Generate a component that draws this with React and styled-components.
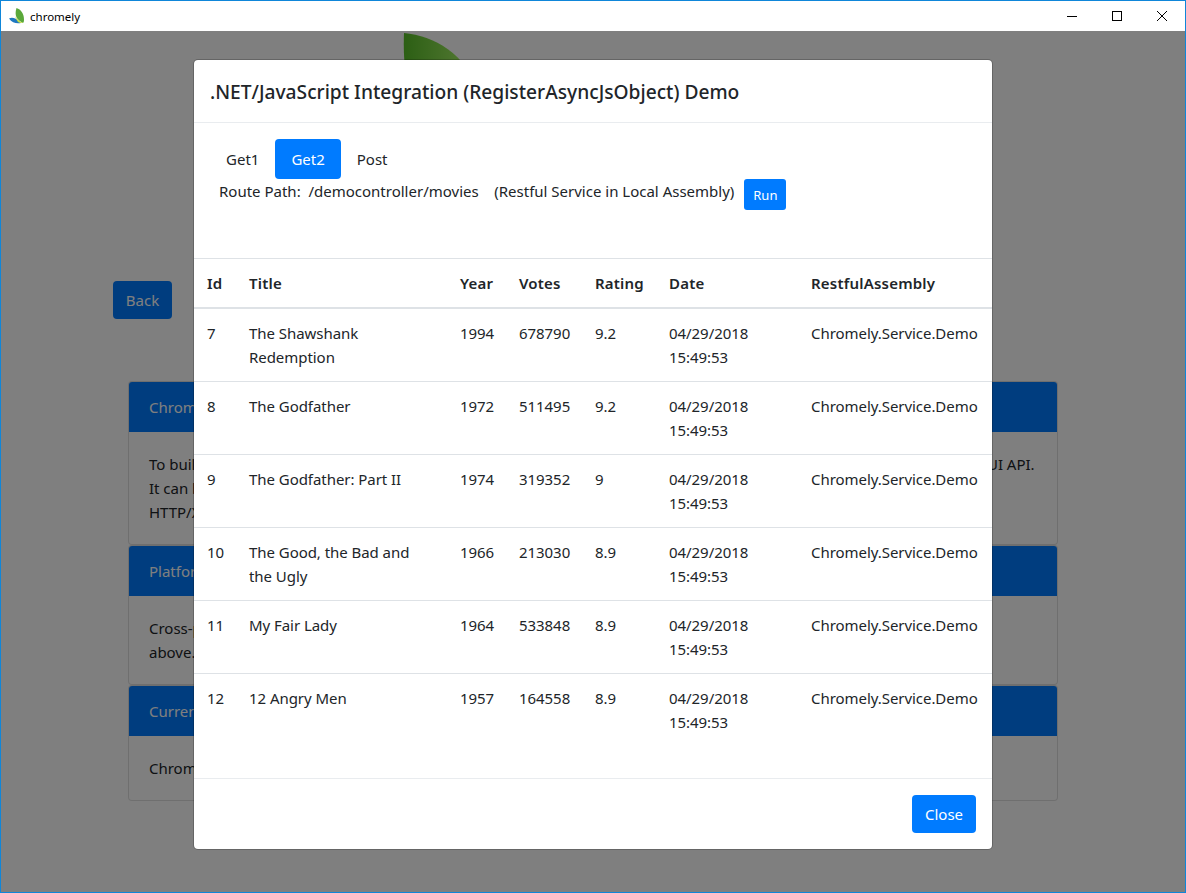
import styled, { createGlobalStyle } from 'styled-components';

const movies = [
  { id: 7, title: 'The Shawshank Redemption', year: 1994, votes: 678790, rating: '9.2' },
  { id: 8, title: 'The Godfather', year: 1972, votes: 511495, rating: '9.2' },
  { id: 9, title: 'The Godfather: Part II', year: 1974, votes: 319352, rating: '9' },
  { id: 10, title: 'The Good, the Bad and the Ugly', year: 1966, votes: 213030, rating: '8.9' },
  { id: 11, title: 'My Fair Lady', year: 1964, votes: 533848, rating: '8.9' },
  { id: 12, title: '12 Angry Men', year: 1957, votes: 164558, rating: '8.9' },
];

const cards = [
  {
    title: 'Chromely Purpose',
    lines: [
      'To build HTML5 desktop apps with .NET/.NET Core, using the Chromium Embedded Framework (CEF) and a native Gtk GUI API.',
      'It can be used with any JavaScript framework and it serves requests without',
      'HTTP/XHR servers.',
    ],
  },
  {
    title: 'Platforms',
    lines: ['Cross-platform support for Windows, Linux and macOS with the versions listed', 'above.'],
  },
  { title: 'Current Version', lines: ['Chromely 4.0'] },
];

const GlobalStyle = createGlobalStyle`
  html, body {
    margin: 0;
    padding: 0;
    background: #808080;
  }
  * {
    box-sizing: border-box;
  }
  body {
    font-family: "Noto Sans", "Open Sans", sans-serif;
    color: #212529;
  }
`;

const Frame = styled.div`
  position: relative;
  width: 1186px;
  height: 893px;
  border: 1px solid #0f86d9;
  background: #fff;
  overflow: hidden;
`;

const TitleBar = styled.header`
  height: 30px;
  display: flex;
  align-items: center;
  background: #fff;
`;

const AppName = styled.span`
  margin-left: 5px;
  font-size: 11.5px;
  color: #000;
`;

const AppIcon = styled.svg`
  width: 16px;
  height: 16px;
  margin-left: 8px;
`;

const WindowButtons = styled.div`
  margin-left: auto;
  margin-right: 1px;
  display: flex;
`;

const WindowButton = styled.div`
  width: 45px;
  height: 30px;
  display: flex;
  align-items: center;
  justify-content: center;
  svg {
    width: 12px;
    height: 12px;
  }
`;

const Page = styled.main`
  position: relative;
  height: 861px;
  padding: 2px 127px 0;
  overflow: hidden;
`;

const Hero = styled.svg`
  display: block;
  width: 120px;
  height: 120px;
  margin-left: 275px;
`;

const BackButton = styled.div`
  width: 59px;
  height: 38px;
  margin: 128px 0 0 -15px;
  display: flex;
  align-items: center;
  justify-content: center;
  border-radius: 4px;
  background: #007bff;
  color: #fff;
  font-size: 15px;
`;

const Cards = styled.section`
  margin-top: 62px;
`;

const Card = styled.article`
  border: 1px solid rgba(0, 0, 0, 0.125);
  border-radius: 4px;
  overflow: hidden;
  background: #fff;
`;

const CardHeader = styled.div`
  height: 50px;
  padding: 0 20px;
  display: flex;
  align-items: center;
  background: #007bff;
  color: #fff;
  font-size: 15px;
`;

const CardBody = styled.div`
  padding: 20px 20px 20px;
  font-size: 15px;
  line-height: 24px;
`;

const CardLine = styled.div`
  white-space: nowrap;
  letter-spacing: -0.02px;
`;

const Backdrop = styled.div`
  position: absolute;
  inset: 0;
  background: rgba(0, 0, 0, 0.5);
`;

const Modal = styled.div`
  position: absolute;
  left: 192px;
  top: 58px;
  width: 800px;
  height: 791px;
  display: flex;
  flex-direction: column;
  background: #fff;
  border: 1px solid rgba(0, 0, 0, 0.2);
  border-radius: 5px;
  background-clip: padding-box;
`;

const ModalHeader = styled.div`
  height: 63px;
  padding: 0 16px;
  display: flex;
  align-items: center;
  border-bottom: 1px solid #e9ecef;
`;

const ModalTitle = styled.h5`
  margin: 0;
  font-size: 19.2px;
  font-weight: 500;
`;

const ModalBody = styled.div`
  flex: 1;
`;

const Controls = styled.div`
  height: 135px;
  padding: 16px 16px 0;
`;

const Tabs = styled.nav`
  display: flex;
`;

const Tab = styled.div`
  height: 40px;
  padding: 0 16px;
  display: flex;
  align-items: center;
  border-radius: 4px;
  font-size: 15px;
  color: ${(props) => (props.$active ? '#fff' : '#212529')};
  background: ${(props) => (props.$active ? '#007bff' : 'transparent')};
`;

const RouteRow = styled.div`
  display: flex;
  align-items: flex-start;
  padding-left: 9px;
  font-size: 15px;
  line-height: 24px;
  white-space: pre;
`;

const RunButton = styled.div`
  width: 42px;
  height: 31px;
  margin-left: 10px;
  display: flex;
  align-items: center;
  justify-content: center;
  border-radius: 3px;
  background: #007bff;
  color: #fff;
  font-size: 13px;
`;

const Table = styled.table`
  width: 798px;
  table-layout: fixed;
  border-collapse: collapse;
  font-size: 15px;
  line-height: 24px;
  tbody tr:first-child td {
    height: 74px;
  }
`;

const HeadCell = styled.th`
  height: 49px;
  padding: 0 12px;
  text-align: left;
  font-weight: 600;
  letter-spacing: 0.2px;
  border-top: 1px solid #dee2e6;
  border-bottom: 2px solid #dee2e6;
  width: ${(props) => props.$w}px;
  &:first-child {
    padding-left: 13px;
  }
`;

const Cell = styled.td`
  height: 73px;
  padding: 12px 12px 0;
  vertical-align: top;
  letter-spacing: -0.05px;
  border-bottom: 1px solid ${(props) => (props.$last ? 'transparent' : '#dee2e6')};
  white-space: ${(props) => (props.$nowrap ? 'nowrap' : 'normal')};
  &:first-child {
    padding-left: 13px;
  }
  &:nth-child(2) {
    padding-right: 24px;
  }
`;

const ModalFooter = styled.div`
  height: 71px;
  padding: 0 16px;
  display: flex;
  align-items: center;
  justify-content: flex-end;
  border-top: 1px solid #e9ecef;
`;

const CloseButton = styled.div`
  width: 64px;
  height: 38px;
  display: flex;
  align-items: center;
  justify-content: center;
  border-radius: 4px;
  background: #007bff;
  color: #fff;
  font-size: 15px;
`;

const columns = [
  ['Id', 43],
  ['Title', 211],
  ['Year', 59],
  ['Votes', 76],
  ['Rating', 74],
  ['Date', 142],
  ['RestfulAssembly', 193],
];

const MovieRow = ({ movie, last }) => (
  <tr>
    <Cell $last={last}>{movie.id}</Cell>
    <Cell $last={last}>{movie.title}</Cell>
    <Cell $last={last}>{movie.year}</Cell>
    <Cell $last={last}>{movie.votes}</Cell>
    <Cell $last={last}>{movie.rating}</Cell>
    <Cell $last={last}>04/29/2018 15:49:53</Cell>
    <Cell $last={last} $nowrap>Chromely.Service.Demo</Cell>
  </tr>
);

const App = () => {
  return (
    <Frame>
      <GlobalStyle />
      <TitleBar>
        <AppIcon viewBox="0 0 16 16">
          <path d="M7.500 0C12 1.500 15 5.500 15 12c0 1.500-.5 2.500-1 3C8 12 5 8 7.500 0z" fill="#5aa83a" />
          <path d="M0 10.500C3 9 6.500 10 9 12.500c1 1 2 2 3 2.500-4 1-9 0-12-4.500z" fill="#1f78c1" />
          <path d="M6 8c1.500 3 4.500 5.500 8 7-2 .3-3.500 0-5-1C7.500 12 6.500 10 6 8z" fill="#c4dc3c" />
        </AppIcon>
        <AppName>chromely</AppName>
        <WindowButtons>
          <WindowButton>
            <svg viewBox="0 0 12 12"><path d="M1 6.500h10" stroke="#000" fill="none" /></svg>
          </WindowButton>
          <WindowButton>
            <svg viewBox="0 0 12 12"><rect x="1.500" y="1.500" width="9" height="9" stroke="#000" fill="none" /></svg>
          </WindowButton>
          <WindowButton>
            <svg viewBox="0 0 12 12"><path d="M1 1l10 10M11 1L1 11" stroke="#000" fill="none" /></svg>
          </WindowButton>
        </WindowButtons>
      </TitleBar>
      <Page>
        <Hero viewBox="0 0 120 120">
          <defs>
            <linearGradient id="leaf" x1="0" y1="0" x2="1" y2="0">
              <stop offset="0" stopColor="#58be28" />
              <stop offset="1" stopColor="#b4fa70" />
            </linearGradient>
          </defs>
          <path d="M1 0c30 3 62 20 75 60L40 110C10 90-1 50 1 0z" fill="url(#leaf)" />
        </Hero>
        <BackButton>Back</BackButton>
        <Cards>
          {cards.map((card) => (
            <Card key={card.title}>
              <CardHeader>{card.title}</CardHeader>
              <CardBody>
                {card.lines.map((line) => (
                  <CardLine key={line}>{line}</CardLine>
                ))}
              </CardBody>
            </Card>
          ))}
        </Cards>
        <Backdrop />
      </Page>
      <Modal>
        <ModalHeader>
          <ModalTitle>.NET/JavaScript Integration (RegisterAsyncJsObject) Demo</ModalTitle>
        </ModalHeader>
        <ModalBody>
          <Controls>
            <Tabs>
              <Tab>Get1</Tab>
              <Tab $active>Get2</Tab>
              <Tab>Post</Tab>
            </Tabs>
            <RouteRow>
              Route Path:  /democontroller/movies    (Restful Service in Local Assembly)
              <RunButton>Run</RunButton>
            </RouteRow>
          </Controls>
          <Table>
            <thead>
              <tr>
                {columns.map(([name, w]) => (
                  <HeadCell key={name} $w={w}>{name}</HeadCell>
                ))}
              </tr>
            </thead>
            <tbody>
              {movies.map((movie, i) => (
                <MovieRow key={movie.id} movie={movie} last={i === movies.length - 1} />
              ))}
            </tbody>
          </Table>
        </ModalBody>
        <ModalFooter>
          <CloseButton>Close</CloseButton>
        </ModalFooter>
      </Modal>
    </Frame>
  );
};

export default App;
